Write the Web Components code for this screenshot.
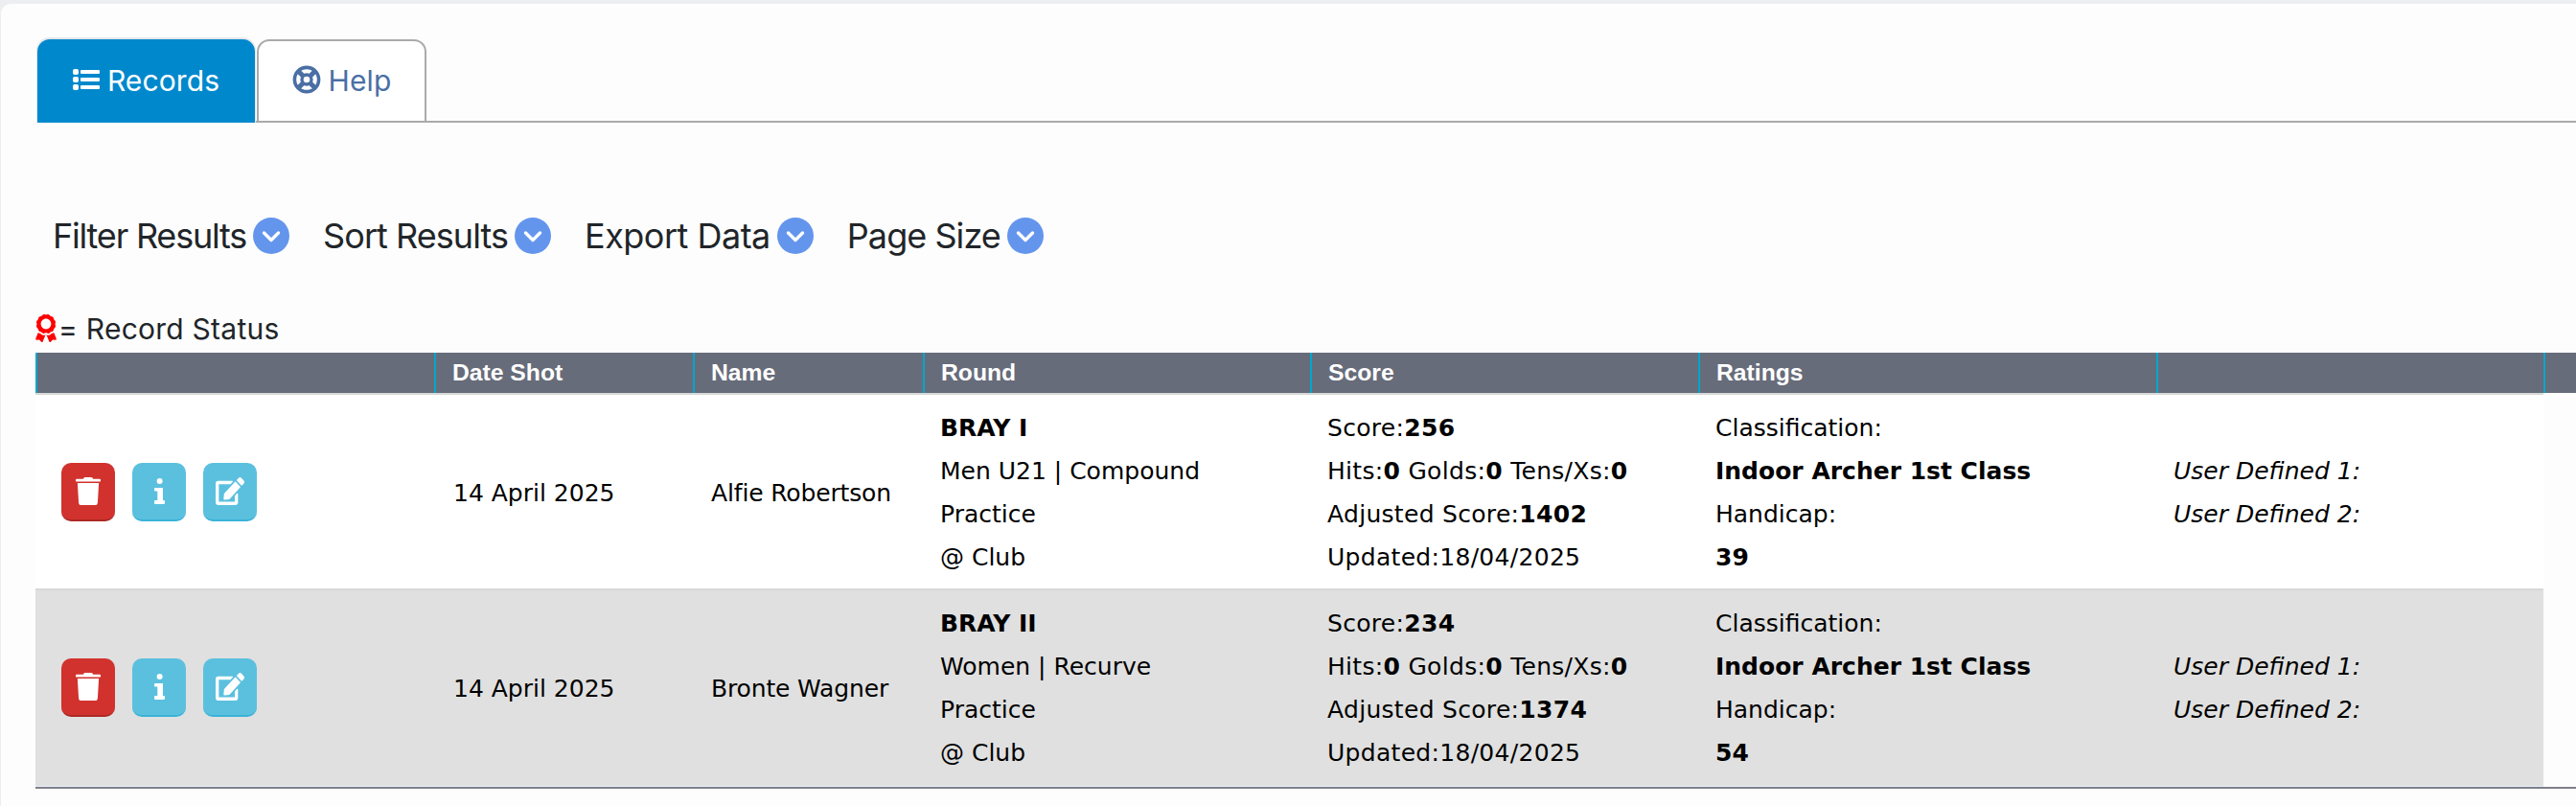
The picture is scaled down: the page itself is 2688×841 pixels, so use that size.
<!DOCTYPE html>
<html lang="en">
<head>
<meta charset="utf-8">
<title>Records</title>
<style>
    html, body { margin: 0; padding: 0; height: 100%; background: #eceef2; overflow: hidden; }
    body { font-family: "DejaVu Sans", sans-serif; }
    b { font-weight: 700; }
    i { font-style: italic; }
</style>
</head>
<body>
<records-page>
    <tab-bar>
        <tab-item active icon="list">Records</tab-item>
        <tab-item icon="help">Help</tab-item>
    </tab-bar>
    <menu-bar>
        <menu-item style="letter-spacing: -1.2px">Filter Results</menu-item>
        <menu-item>Sort Results</menu-item>
        <menu-item style="letter-spacing: -0.5px">Export Data</menu-item>
        <menu-item>Page Size</menu-item>
    </menu-bar>
    <record-legend>= Record Status</record-legend>
    <records-table>
        <table-head></table-head>
        <record-row>
            <span slot="date">14 April 2025</span>
            <span slot="name">Alfie Robertson</span>
            <div slot="round"><b>BRAY I</b></div>
            <div slot="round">Men U21 | Compound</div>
            <div slot="round">Practice</div>
            <div slot="round">@ Club</div>
            <div slot="score">Score:<b>256</b></div>
            <div slot="score">Hits:<b>0</b> Golds:<b>0</b> Tens/Xs:<b>0</b></div>
            <div slot="score">Adjusted Score:<b>1402</b></div>
            <div slot="score">Updated:18/04/2025</div>
            <div slot="ratings">Classification:</div>
            <div slot="ratings"><b>Indoor Archer 1st Class</b></div>
            <div slot="ratings">Handicap:</div>
            <div slot="ratings"><b>39</b></div>
            <div slot="user"><i>User Defined 1:</i></div>
            <div slot="user"><i>User Defined 2:</i></div>
        </record-row>
        <record-row shaded>
            <span slot="date">14 April 2025</span>
            <span slot="name">Bronte Wagner</span>
            <div slot="round"><b>BRAY II</b></div>
            <div slot="round">Women | Recurve</div>
            <div slot="round">Practice</div>
            <div slot="round">@ Club</div>
            <div slot="score">Score:<b>234</b></div>
            <div slot="score">Hits:<b>0</b> Golds:<b>0</b> Tens/Xs:<b>0</b></div>
            <div slot="score">Adjusted Score:<b>1374</b></div>
            <div slot="score">Updated:18/04/2025</div>
            <div slot="ratings">Classification:</div>
            <div slot="ratings"><b>Indoor Archer 1st Class</b></div>
            <div slot="ratings">Handicap:</div>
            <div slot="ratings"><b>54</b></div>
            <div slot="user"><i>User Defined 1:</i></div>
            <div slot="user"><i>User Defined 2:</i></div>
        </record-row>
    </records-table>
</records-page>
<script>
const ICONS = {
    list: `<svg viewBox="0 0 28 22" width="28" height="22" fill="currentColor">
        <rect x="0" y="0" width="6" height="6" rx="2"/><rect x="0" y="8" width="6" height="6" rx="2"/><rect x="0" y="16" width="6" height="6" rx="2"/>
        <rect x="8" y="1" width="20" height="4" rx="1"/><rect x="8" y="9" width="20" height="4" rx="1"/><rect x="8" y="17" width="20" height="4" rx="1"/></svg>`,
    help: `<svg viewBox="0 0 30 30" width="30" height="30" fill="none" stroke="currentColor">
        <circle cx="15" cy="15" r="12.6" stroke-width="3.6"/><circle cx="15" cy="15" r="5" stroke-width="3.4"/>
        <path d="M6 6l5.5 5.5M24 6l-5.5 5.5M6 24l5.5-5.5M24 24l-5.5-5.5" stroke-width="5"/></svg>`,
    trash: `<svg viewBox="0 0 448 512" width="26" height="29" preserveAspectRatio="none" fill="#fff"><path d="M432 32H312l-9.4-18.7A24 24 0 0 0 281.1 0H166.8a23.72 23.72 0 0 0-21.4 13.3L136 32H16A16 16 0 0 0 0 48v16a16 16 0 0 0 16 16h416a16 16 0 0 0 16-16V48a16 16 0 0 0-16-16zM53.2 467a48 48 0 0 0 47.9 45h245.8a48 48 0 0 0 47.9-45L416 104H32z"/></svg>`,
    info: `<svg viewBox="0 0 11 27" width="11" height="27" fill="#fff"><circle cx="5.6" cy="3" r="3"/><path d="M1 10H9V23H10A1 1 0 0 1 11 24V26A1 1 0 0 1 10 27H1A1 1 0 0 1 0 26V24A1 1 0 0 1 1 23H3.3V13.5H1A1 1 0 0 1 0 12.5V11A1 1 0 0 1 1 10Z"/></svg>`,
    edit: `<svg viewBox="0 0 576 512" width="30" height="29" preserveAspectRatio="none" fill="#fff"><path d="M402.6 83.2l90.2 90.2c3.8 3.8 3.8 10 0 13.8L274.4 405.6l-92.8 10.3c-12.4 1.4-22.9-9.1-21.5-21.5l10.3-92.8L388.8 83.2c3.8-3.8 10-3.8 13.8 0zm162-22.9l-48.8-48.8c-15.2-15.2-39.9-15.2-55.2 0l-35.4 35.4c-3.8 3.8-3.8 10 0 13.8l90.2 90.2c3.8 3.8 10 3.8 13.8 0l35.4-35.4c15.2-15.3 15.2-40 0-55.2zM384 346.2V448H64V128h229.8c3.2 0 6.2-1.3 8.5-3.5l40-40c7.6-7.6 2.2-20.5-8.5-20.5H48C21.5 64 0 85.5 0 112v352c0 26.5 21.5 48 48 48h352c26.5 0 48-21.5 48-48V306.2c0-10.7-12.9-16-20.5-8.5l-40 40c-2.2 2.3-3.5 5.3-3.5 8.5z"/></svg>`,
    award: `<svg viewBox="0 0 384 512" width="22" height="29" fill="#f00"><path d="M97.12 362.63c-8.69-8.69-4.16-6.24-25.12-11.85-9.51-2.55-17.87-7.45-25.43-13.32L1.2 448.7c-4.39 10.77 3.81 22.47 15.43 22.03l52.69-2.01L105.56 507c8 8.44 22.04 5.81 26.43-4.96l52.05-127.62c-10.84 6.04-22.87 9.58-35.31 9.58-19.5 0-37.82-7.59-51.61-21.37zM382.8 448.7l-45.37-111.24c-7.56 5.88-15.92 10.77-25.43 13.32-21.07 5.64-16.45 3.18-25.12 11.85-13.79 13.78-32.12 21.37-51.62 21.37-12.44 0-24.47-3.55-35.31-9.58L252 502.04c4.39 10.77 18.44 13.4 26.43 4.96l36.25-38.28 52.69 2.01c11.62.44 19.82-11.27 15.43-22.03zM263 340c15.28-15.55 17.03-14.21 38.79-20.14 13.89-3.79 24.75-14.84 28.47-28.98 7.48-28.4 5.54-24.97 25.95-45.75 10.17-10.35 14.14-25.44 10.42-39.58-7.47-28.38-7.48-24.42 0-52.83 3.72-14.14-.25-29.23-10.42-39.58-20.41-20.78-18.47-17.36-25.95-45.75-3.72-14.14-14.58-25.19-28.47-28.98-27.88-7.61-24.52-5.62-44.95-26.41-10.17-10.35-25-14.4-38.89-10.61-27.87 7.6-23.98 7.61-51.9 0-13.89-3.79-28.72.25-38.89 10.61-20.41 20.78-17.05 18.8-44.94 26.41-13.89 3.79-24.75 14.84-28.47 28.98-7.47 28.39-5.54 24.97-25.95 45.75-10.17 10.35-14.15 25.44-10.42 39.58 7.47 28.36 7.48 24.4 0 52.82-3.72 14.14.25 29.23 10.42 39.59 20.41 20.78 18.47 17.35 25.95 45.75 3.72 14.14 14.58 25.19 28.47 28.98C104.6 325.96 106.27 325 121 340c13.23 13.47 33.84 15.88 49.74 5.82a39.676 39.676 0 0 1 42.53 0c15.89 10.06 36.5 7.65 49.73-5.82zM97.66 175.96c0-53.03 42.24-96.02 94.34-96.02s94.34 42.99 94.34 96.02-42.24 96.02-94.34 96.02-94.34-42.99-94.34-96.02z"/></svg>`,
    chevron: `<svg viewBox="0 0 38 38" width="38" height="38"><circle cx="19" cy="19" r="19" fill="#6495ed"/><path d="M11.5 16l7.5 7.5 7.5-7.5" fill="none" stroke="#fff" stroke-width="3.4" stroke-linecap="round" stroke-linejoin="round"/></svg>`
};

const UI_FONT = `Inter, "Noto Sans", sans-serif`;

/**
 * White card holding the whole page.
 */
class RecordsPage extends HTMLElement {
    constructor() {
        super();
        this.attachShadow({ mode: "open" }).innerHTML = `
        <style>
            :host {
                display: block;
                margin: 4px 0 0 1px;
                padding: 37px 0 0 36px;
                height: 837px;
                box-sizing: border-box;
                background: #fdfdfd;
                border-top-left-radius: 10px;
                overflow: hidden;
            }
        </style>
        <slot></slot>`;
    }
}

class TabBar extends HTMLElement {
    constructor() {
        super();
        this.attachShadow({ mode: "open" }).innerHTML = `
        <style>
            :host {
                display: flex;
                align-items: flex-end;
                gap: 2px;
                height: 87px;
                margin-left: 2px;
                box-sizing: border-box;
                border-bottom: 2px solid #aaa;
            }
        </style>
        <slot></slot>`;
    }
}

class TabItem extends HTMLElement {
    constructor() {
        super();
        this.attachShadow({ mode: "open" });
    }

    connectedCallback() {
        const active = this.hasAttribute("active");
        this.shadowRoot.innerHTML = `
        <style>
            :host {
                display: flex;
                align-items: center;
                justify-content: center;
                gap: 8px;
                box-sizing: border-box;
                height: 87px;
                margin-bottom: -2px;
                width: ${active ? 227 : 177}px;
                padding-bottom: 1px;
                font: 400 30px ${UI_FONT};
                letter-spacing: 0.1px;
                border-radius: 13px 13px 0 0;
                color: ${active ? "#fff" : "#4a6fa5"};
                background: ${active ? "#0088cc" : "#fff"};
                border: ${active ? "0" : "2px solid #aaa"};
                ${active ? "box-shadow: 0 -1px 0 1px #e3e6ea;" : ""}
            }
            svg { display: block; margin-top: -2px; }
        </style>
        ${ICONS[this.getAttribute("icon")]}<slot></slot>`;
    }
}

class MenuBar extends HTMLElement {
    constructor() {
        super();
        this.attachShadow({ mode: "open" }).innerHTML = `
        <style>
            :host {
                display: flex;
                gap: 35px;
                margin: 99px 0 0 18px;
                height: 38px;
            }
        </style>
        <slot></slot>`;
    }
}

class MenuItem extends HTMLElement {
    constructor() {
        super();
        this.attachShadow({ mode: "open" }).innerHTML = `
        <style>
            :host {
                display: flex;
                align-items: center;
                gap: 7px;
                font: 400 36px ${UI_FONT};
                letter-spacing: -0.95px;
                color: #212529;
                line-height: 38px;
                white-space: nowrap;
            }
            svg { display: block; }
        </style>
        <slot></slot>${ICONS.chevron}`;
    }
}

class RecordLegend extends HTMLElement {
    constructor() {
        super();
        this.attachShadow({ mode: "open" }).innerHTML = `
        <style>
            :host {
                display: flex;
                align-items: center;
                gap: 2px;
                height: 29px;
                margin: 63px 0 11px 0;
                font: 400 30px ${UI_FONT};
                letter-spacing: 0.25px;
                color: #212529;
                white-space: nowrap;
            }
            svg { display: block; }
        </style>
        ${ICONS.award}<slot></slot>`;
    }
}

class RecordsTable extends HTMLElement {
    constructor() {
        super();
        this.attachShadow({ mode: "open" }).innerHTML = `
        <style>
            :host {
                display: block;
                --cols: 416px 270px 240px 404px 405px 478px 404px;
                border-bottom: 2px solid #7f808a;
            }
            .tail { height: 1.5px; background: #e6f0fa; width: 2618px; }
        </style>
        <slot></slot><div class="tail"></div>`;
    }
}

class TableHead extends HTMLElement {
    constructor() {
        super();
        const titles = ["", "Date Shot", "Name", "Round", "Score", "Ratings", ""];
        this.attachShadow({ mode: "open" }).innerHTML = `
        <style>
            :host {
                display: grid;
                grid-template-columns: var(--cols) 1fr;
                height: 42px;
                background: #676c7a;
                font: 700 24.7px/42px "Liberation Sans", Arial, sans-serif;
                color: #fff;
            }
            div { box-sizing: border-box; border-left: 2px solid #00a7ce; padding-left: 17px; height: 42px; white-space: nowrap; }
            div:first-child { border-left-color: #0d7cf5; }
        </style>
        ${titles.map((title) => `<div>${title}</div>`).join("")}<div></div>`;
    }
}

/**
 * One score record: action buttons plus a cell per column.
 */
class RecordRow extends HTMLElement {
    constructor() {
        super();
        this.attachShadow({ mode: "open" }).innerHTML = `
        <style>
            :host {
                display: grid;
                grid-template-columns: var(--cols);
                width: 2617px;
                border-top: 2px solid #d8d8d8;
                background: #fff;
                font: 400 25px/45px "DejaVu Sans", Verdana, sans-serif;
                color: #000;
            }
            :host([shaded]) { background: #e0e0e0; padding-bottom: 1.5px; }
            .cell { padding: 12px 0 10px 18px; align-self: center; white-space: nowrap; }
            .date { padding-left: 20px; }
            .name { padding-left: 19px; letter-spacing: -0.15px; }
            .score { letter-spacing: 0.3px; }
            .actions { display: flex; gap: 18px; padding: 0 0 0 27px; }
        </style>
        <div class="cell actions">
            <icon-button kind="trash"></icon-button>
            <icon-button kind="info"></icon-button>
            <icon-button kind="edit"></icon-button>
        </div>
        <div class="cell date"><slot name="date"></slot></div>
        <div class="cell name"><slot name="name"></slot></div>
        <div class="cell"><slot name="round"></slot></div>
        <div class="cell score"><slot name="score"></slot></div>
        <div class="cell"><slot name="ratings"></slot></div>
        <div class="cell"><slot name="user"></slot></div>`;
    }
}

class IconButton extends HTMLElement {
    constructor() {
        super();
        this.attachShadow({ mode: "open" });
    }

    connectedCallback() {
        const kind = this.getAttribute("kind");
        const danger = kind === "trash";
        this.shadowRoot.innerHTML = `
        <style>
            :host {
                display: flex;
                align-items: center;
                justify-content: center;
                box-sizing: border-box;
                width: 56px;
                height: 61px;
                border-radius: 10px;
                background: ${danger ? "#d2322d" : "#5bc0de"};
                border-bottom: 2px solid ${danger ? "#ac2925" : "#39b3d7"};
            }
            svg { display: block; }
        </style>
        ${ICONS[kind]}`;
    }
}

customElements.define("records-page", RecordsPage);
customElements.define("tab-bar", TabBar);
customElements.define("tab-item", TabItem);
customElements.define("menu-bar", MenuBar);
customElements.define("menu-item", MenuItem);
customElements.define("record-legend", RecordLegend);
customElements.define("records-table", RecordsTable);
customElements.define("table-head", TableHead);
customElements.define("record-row", RecordRow);
customElements.define("icon-button", IconButton);
</script>
</body>
</html>
